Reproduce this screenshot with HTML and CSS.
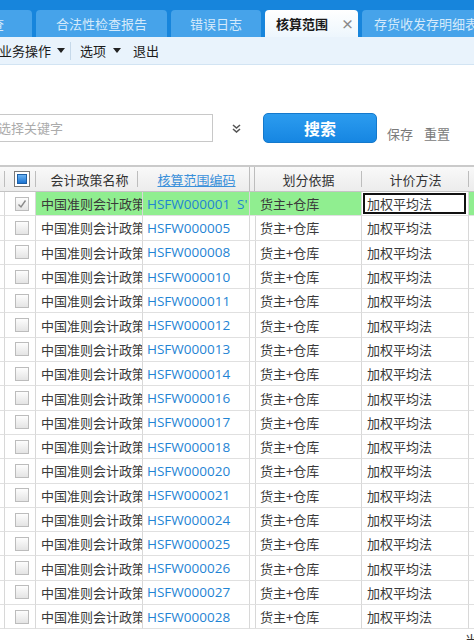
FILE: index.html
```html
<!DOCTYPE html>
<html lang="zh-CN">
<head>
<meta charset="utf-8">
<title>核算范围</title>
<link rel="stylesheet" href="styles.css">
</head>
<body>
<div class="topbar">
  <div class="tab tab-cut">数据检查</div>
  <div class="tab tab-1">合法性检查报告</div>
  <div class="tab tab-2">错误日志</div>
  <div class="tab tab-active"><span>核算范围</span><span class="close">×</span></div>
  <div class="tab tab-last">存货收发存明细表</div>
</div>
<div class="toolbar">
  <span class="menu m1">业务操作</span><i class="caret c1"></i>
  <span class="sep"></span>
  <span class="menu m2">选项</span><i class="caret c2"></i>
  <span class="menu m3">退出</span>
</div>
<div class="search">
  <div class="input">选择关键字</div>
  <svg class="chev" width="9" height="9" viewBox="0 0 9 9"><polyline points="1,1 4.5,4 8,1" fill="none" stroke="#555" stroke-width="1.6"/><polyline points="1,5 4.5,8 8,5" fill="none" stroke="#555" stroke-width="1.6"/></svg>
  <button class="btn">搜索</button>
  <span class="link l1">保存</span>
  <span class="link l2">重置</span>
</div>
<div class="grid">
  <div class="row head">
    <div class="hc"></div>
    <div class="hc hcb"><span class="hbox"><span class="hin"></span></span></div>
    <div class="hc div2">会计政策名称</div>
    <div class="hc full"><span class="hlink">核算范围编码</span></div>
    <div class="hc full"></div>
    <div class="hc div">划分依据</div>
    <div class="hc div">计价方法</div>
    <div class="hc"></div>
  </div>
  <div class="row sel">
    <div class="c"></div>
    <div class="c cbc"><span class="cb"><svg width="12" height="12" viewBox="0 0 12 12"><polyline points="2.5,6.5 5,9 9.5,2.5" fill="none" stroke="#8a8a8a" stroke-width="1.4"/></svg></span></div>
    <div class="c g name">中国准则会计政策</div>
    <div class="c g code">HSFW000001&nbsp;&nbsp;S'</div>
    <div class="c g"></div>
    <div class="c g">货主+仓库</div>
    <div class="c edit"><div class="editor">加权平均法</div></div>
    <div class="c g"></div>
  </div>
  <div class="row"><div class="c"></div><div class="c cbc"><span class="cb"></span></div><div class="c name">中国准则会计政策</div><div class="c code">HSFW000005</div><div class="c"></div><div class="c">货主+仓库</div><div class="c">加权平均法</div><div class="c"></div></div>
  <div class="row"><div class="c"></div><div class="c cbc"><span class="cb"></span></div><div class="c name">中国准则会计政策</div><div class="c code">HSFW000008</div><div class="c"></div><div class="c">货主+仓库</div><div class="c">加权平均法</div><div class="c"></div></div>
  <div class="row"><div class="c"></div><div class="c cbc"><span class="cb"></span></div><div class="c name">中国准则会计政策</div><div class="c code">HSFW000010</div><div class="c"></div><div class="c">货主+仓库</div><div class="c">加权平均法</div><div class="c"></div></div>
  <div class="row"><div class="c"></div><div class="c cbc"><span class="cb"></span></div><div class="c name">中国准则会计政策</div><div class="c code">HSFW000011</div><div class="c"></div><div class="c">货主+仓库</div><div class="c">加权平均法</div><div class="c"></div></div>
  <div class="row"><div class="c"></div><div class="c cbc"><span class="cb"></span></div><div class="c name">中国准则会计政策</div><div class="c code">HSFW000012</div><div class="c"></div><div class="c">货主+仓库</div><div class="c">加权平均法</div><div class="c"></div></div>
  <div class="row"><div class="c"></div><div class="c cbc"><span class="cb"></span></div><div class="c name">中国准则会计政策</div><div class="c code">HSFW000013</div><div class="c"></div><div class="c">货主+仓库</div><div class="c">加权平均法</div><div class="c"></div></div>
  <div class="row"><div class="c"></div><div class="c cbc"><span class="cb"></span></div><div class="c name">中国准则会计政策</div><div class="c code">HSFW000014</div><div class="c"></div><div class="c">货主+仓库</div><div class="c">加权平均法</div><div class="c"></div></div>
  <div class="row"><div class="c"></div><div class="c cbc"><span class="cb"></span></div><div class="c name">中国准则会计政策</div><div class="c code">HSFW000016</div><div class="c"></div><div class="c">货主+仓库</div><div class="c">加权平均法</div><div class="c"></div></div>
  <div class="row"><div class="c"></div><div class="c cbc"><span class="cb"></span></div><div class="c name">中国准则会计政策</div><div class="c code">HSFW000017</div><div class="c"></div><div class="c">货主+仓库</div><div class="c">加权平均法</div><div class="c"></div></div>
  <div class="row"><div class="c"></div><div class="c cbc"><span class="cb"></span></div><div class="c name">中国准则会计政策</div><div class="c code">HSFW000018</div><div class="c"></div><div class="c">货主+仓库</div><div class="c">加权平均法</div><div class="c"></div></div>
  <div class="row"><div class="c"></div><div class="c cbc"><span class="cb"></span></div><div class="c name">中国准则会计政策</div><div class="c code">HSFW000020</div><div class="c"></div><div class="c">货主+仓库</div><div class="c">加权平均法</div><div class="c"></div></div>
  <div class="row"><div class="c"></div><div class="c cbc"><span class="cb"></span></div><div class="c name">中国准则会计政策</div><div class="c code">HSFW000021</div><div class="c"></div><div class="c">货主+仓库</div><div class="c">加权平均法</div><div class="c"></div></div>
  <div class="row"><div class="c"></div><div class="c cbc"><span class="cb"></span></div><div class="c name">中国准则会计政策</div><div class="c code">HSFW000024</div><div class="c"></div><div class="c">货主+仓库</div><div class="c">加权平均法</div><div class="c"></div></div>
  <div class="row"><div class="c"></div><div class="c cbc"><span class="cb"></span></div><div class="c name">中国准则会计政策</div><div class="c code">HSFW000025</div><div class="c"></div><div class="c">货主+仓库</div><div class="c">加权平均法</div><div class="c"></div></div>
  <div class="row"><div class="c"></div><div class="c cbc"><span class="cb"></span></div><div class="c name">中国准则会计政策</div><div class="c code">HSFW000026</div><div class="c"></div><div class="c">货主+仓库</div><div class="c">加权平均法</div><div class="c"></div></div>
  <div class="row"><div class="c"></div><div class="c cbc"><span class="cb"></span></div><div class="c name">中国准则会计政策</div><div class="c code">HSFW000027</div><div class="c"></div><div class="c">货主+仓库</div><div class="c">加权平均法</div><div class="c"></div></div>
  <div class="row"><div class="c"></div><div class="c cbc"><span class="cb"></span></div><div class="c name">中国准则会计政策</div><div class="c code">HSFW000028</div><div class="c"></div><div class="c">货主+仓库</div><div class="c">加权平均法</div><div class="c"></div></div>
</div>
<div class="foot">当前</div>
</body>
</html>
```

FILE: styles.css
```css
html, body {
  margin: 0;
  width: 474px;
  height: 640px;
  overflow: hidden;
  background: #fff;
}
body {
  font-family: "Noto Sans CJK SC", sans-serif;
  font-size: 13px;
  color: #333;
}

/* tabs */
.topbar {
  height: 37px;
  background: #1785dc;
  display: flex;
  align-items: flex-end;
  gap: 4px;
  overflow: hidden;
}
.tab {
  flex: none;
  box-sizing: border-box;
  height: 27px;
  line-height: 27px;
  border-radius: 4px 4px 0 0;
  background: #46a3ea;
  color: #d4eafb;
  text-align: center;
  white-space: nowrap;
  overflow: hidden;
}
.tab-cut {
  width: 90px;
  margin-left: -58px;
  text-align: right;
  padding-right: 28px;
}
.tab-1 { width: 131px; }
.tab-2 { width: 90px; }
.tab-active {
  width: 93px;
  text-align: left;
  padding-left: 11px;
  background: linear-gradient(#ffffff, #edf6fd);
  color: #1a1a1a;
  font-weight: bold;
}
.tab-active .close {
  margin-left: 13px;
  color: #8a8a8a;
  font-size: 13px;
  font-weight: bold;
}
.tab-last {
  width: 140px;
  text-align: left;
  padding-left: 12px;
}

/* toolbar */
.toolbar {
  box-sizing: border-box;
  height: 28px;
  background: #e9f3fc;
  border-bottom: 1px solid #d2e4f3;
  display: flex;
  align-items: center;
  color: #1a1a1a;
  white-space: nowrap;
}
.m1 { margin-left: -1px; }
.caret {
  display: block;
  width: 0;
  height: 0;
  border-left: 4px solid transparent;
  border-right: 4px solid transparent;
  border-top: 5px solid #222;
}
.c1 { margin-left: 6px; }
.sep {
  margin-left: 5px;
  width: 1px;
  height: 18px;
  background: #c6d9ea;
}
.m2 { margin-left: 9px; }
.c2 { margin-left: 7px; }
.m3 { margin-left: 12px; }

/* search */
.search {
  display: flex;
  align-items: center;
  padding-top: 48px;
  height: 30px;
  margin-bottom: 22px;
}
.input {
  box-sizing: border-box;
  margin-left: -10px;
  width: 223px;
  height: 28px;
  line-height: 26px;
  border: 1px solid #c8c8c8;
  padding-left: 7px;
  color: #ababab;
  white-space: nowrap;
}
.chev {
  margin-left: 19px;
  flex: none;
}
.btn {
  margin-left: 22px;
  box-sizing: border-box;
  width: 114px;
  height: 30px;
  border: 1px solid #1479cc;
  border-radius: 5px;
  background: linear-gradient(#2c9cef, #1686e2);
  color: #fff;
  font-family: "Noto Sans CJK SC", sans-serif;
  font-size: 16px;
  font-weight: bold;
  padding: 0;
  line-height: 28px;
}
.link {
  margin-top: 12px;
  line-height: 16px;
  color: #7a7a7a;
  white-space: nowrap;
}
.l1 { margin-left: 10px; }
.l2 { margin-left: 11px; }

/* grid */
.grid {
  margin-left: -15px;
  border-top: 2px solid #cacaca;
}
.row {
  display: grid;
  grid-template-columns: 20px 31px 107px 107px 5px 107px 107px 60px;
  height: 24.3px;
}
.head {
  height: 25px;
  box-sizing: border-box;
  background: linear-gradient(#f9f9f9, #ececec);
  border-bottom: 1px solid #c4c4c4;
}
.hc {
  position: relative;
  display: flex;
  align-items: center;
  justify-content: center;
  white-space: nowrap;
  color: #333;
}
.hc::after {
  content: "";
  position: absolute;
  right: 0;
  top: 4px;
  bottom: 4px;
  width: 1px;
  background: #bdbdbd;
}
.hc.full::after { top: 0; bottom: 0; }
.hc.div2::after { right: 5px; }
.hcb { padding-left: 3px; }
.hbox {
  box-sizing: border-box;
  width: 16px;
  height: 16px;
  border: 1px solid #7a7a7a;
  background: #fff;
  display: flex;
  align-items: center;
  justify-content: center;
}
.hin {
  box-sizing: border-box;
  width: 10px;
  height: 10px;
  border: 1px solid #1c5fa6;
  background: linear-gradient(#6bb3f2, #1c74d2);
}
.hlink {
  color: #3a90da;
  text-decoration: underline;
}

.c {
  box-sizing: border-box;
  border-right: 1px solid #d8d8d8;
  border-bottom: 1px solid #e0e0e0;
  overflow: hidden;
  white-space: nowrap;
  display: flex;
  align-items: center;
  padding-left: 5px;
  color: #3a3a3a;
}
.cbc {
  justify-content: center;
  padding-left: 3px;
}
.cb {
  box-sizing: border-box;
  width: 14px;
  height: 14px;
  border: 1px solid #bcbcbc;
  background: linear-gradient(#fdfdfd, #e4e4e4);
  display: flex;
  align-items: center;
  justify-content: center;
}
.code {
  padding-left: 4px;
  color: #1f84d4;
  font-family: "Open Sans", sans-serif;
  font-size: 13.5px;
}
.sel .g { background: #90ee90; }
.edit {
  padding: 1px 2px 1px 1px;
  align-items: stretch;
}
.editor {
  flex: 1;
  box-sizing: border-box;
  border: 2px solid #111;
  background: #fff;
  padding-left: 2px;
  display: flex;
  align-items: center;
}

.foot {
  padding: 3px 0 0 465px;
  white-space: nowrap;
  line-height: 16px;
  color: #333;
}
```
